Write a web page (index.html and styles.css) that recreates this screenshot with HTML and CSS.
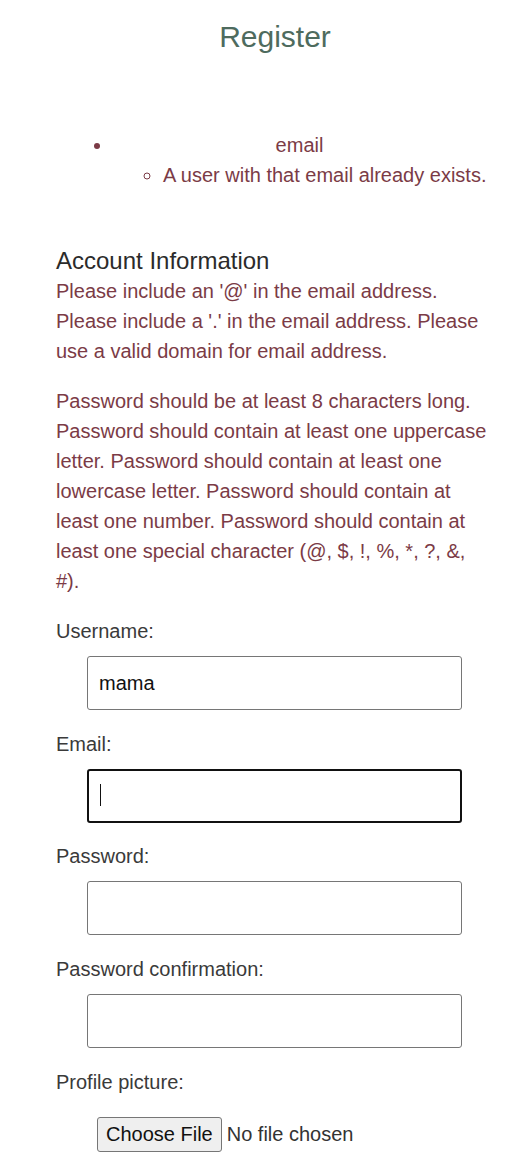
FILE: index.html
```html
<!DOCTYPE html>
<html lang="en">
<head>
<meta charset="utf-8">
<title>Register</title>
<link rel="stylesheet" href="styles.css">
</head>
<body>
<main class="page">
  <h1 class="title">Register</h1>
  <ul class="errorlist">
    <li class="errorlist-field">email
      <ul class="errorlist-sub">
        <li>A user with that email already exists.</li>
      </ul>
    </li>
  </ul>
  <form class="form">
    <h2 class="section-title">Account Information</h2>
    <p class="hint">Please include an '@' in the email address. Please include a '.' in the email address. Please use a valid domain for email address.</p>
    <p class="hint">Password should be at least 8 characters long. Password should contain at least one uppercase letter. Password should contain at least one lowercase letter. Password should contain at least one number. Password should contain at least one special character (@, $, !, %, *, ?, &amp;, #).</p>
    <label class="field-label" for="username">Username:</label>
    <input class="field-input" id="username" type="text" value="mama">
    <label class="field-label" for="email">Email:</label>
    <div class="input-wrap">
      <input class="field-input is-focused" id="email" type="email">
      <span class="caret"></span>
    </div>
    <label class="field-label" for="password">Password:</label>
    <input class="field-input" id="password" type="password">
    <label class="field-label" for="password2">Password confirmation:</label>
    <input class="field-input" id="password2" type="password">
    <label class="field-label" for="picture">Profile picture:</label>
    <input class="file-input" id="picture" type="file">
  </form>
</main>
</body>
</html>
```
FILE: styles.css
```css
html, body {
  margin: 0;
  padding: 0;
  background: #ffffff;
}
body {
  font-family: "Liberation Sans", Arial, sans-serif;
  font-size: 20px;
  line-height: 30px;
  color: #333333;
}
.page {
  padding: 0 14px 0 56px;
}
.title {
  margin: 14px 0 0;
  font-size: 30px;
  line-height: 45px;
  font-weight: normal;
  text-align: center;
  color: #4e6b5e;
}
.errorlist {
  margin: 71px 8px 0 17px;
  padding: 0 0 0 40px;
  list-style: disc;
  color: #7b3b46;
}
.errorlist-field {
  text-align: center;
}
.errorlist-sub {
  margin: 0;
  padding: 0 0 0 50px;
  list-style: circle;
  text-align: left;
  white-space: nowrap;
}
.form {
  display: flex;
  flex-direction: column;
  align-items: flex-start;
  margin-top: 56px;
}
.section-title {
  margin: 0;
  font-size: 24px;
  line-height: 30px;
  font-weight: normal;
  color: #2b2b2b;
}
.hint {
  margin: 0 0 20px;
  color: #7b3b46;
}
.field-label {
  display: block;
  color: #3a3a3a;
}
.field-input {
  box-sizing: border-box;
  width: 375px;
  height: 54px;
  margin: 10px 0 19px 31px;
  padding: 0 11px;
  border: 1px solid #767676;
  border-radius: 3px;
  font-family: "Liberation Sans", Arial, sans-serif;
  font-size: 20px;
  color: #111111;
  background: #ffffff;
  outline: none;
}
.input-wrap {
  position: relative;
  display: flex;
}
.input-wrap .field-input {
  margin-bottom: 18px;
}
.field-input.is-focused {
  border: 2px solid #111111;
  padding: 0 10px;
}
.caret {
  position: absolute;
  left: 44px;
  top: 25px;
  width: 1px;
  height: 22px;
  background: #111111;
}
.file-input {
  margin: 20px 0 0 41px;
  font-family: "Liberation Sans", Arial, sans-serif;
  font-size: 20px;
  line-height: 24px;
  color: #333333;
}
.file-input::file-selector-button {
  box-sizing: border-box;
  height: 35px;
  margin: 0 5px 0 0;
  padding: 0 8px;
  border: 1px solid #767676;
  border-radius: 3px;
  background: #efefef;
  font-family: "Liberation Sans", Arial, sans-serif;
  font-size: 20px;
  color: #111111;
}
```
